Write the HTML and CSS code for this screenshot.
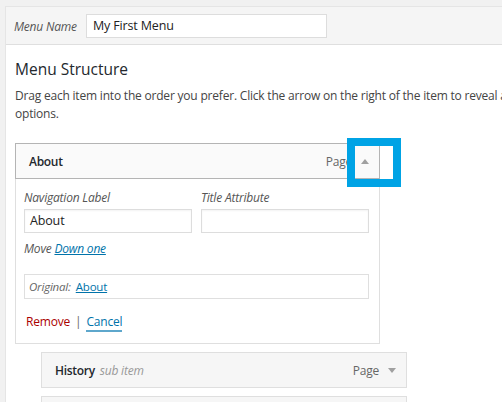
FILE: index.html
```html
<!DOCTYPE html>
<html>
<head>
<meta charset="utf-8">
<link rel="stylesheet" href="styles.css">
</head>
<body>
<div class="page">
  <div class="panel">
    <div class="header">
      <label class="name-label">Menu Name</label>
      <div class="name-input">My First Menu</div>
    </div>
    <div class="body">
      <h3 class="title">Menu Structure</h3>
      <p class="desc">Drag each item into the order you prefer. Click the arrow on the right of the item to reveal additional configuration options.</p>

      <div class="item open">
        <div class="item-bar">
          <span class="item-title">About</span>
          <span class="item-type">Page</span>
          <span class="toggle"><span class="tri up"></span></span>
        </div>
        <div class="settings">
          <div class="fields">
            <div class="field">
              <div class="flabel">Navigation Label</div>
              <div class="finput">About</div>
            </div>
            <div class="field">
              <div class="flabel">Title Attribute</div>
              <div class="finput"></div>
            </div>
          </div>
          <div class="move"><span class="move-label">Move</span> <a class="link">Down one</a></div>
          <div class="original"><span class="orig-label">Original:</span> <a class="link">About</a></div>
          <div class="actions"><a class="remove">Remove</a><span class="sep">|</span><a class="link cancel">Cancel</a></div>
        </div>
        <div class="highlight"></div>
      </div>

      <div class="item sub">
        <div class="item-bar">
          <span class="item-title">History</span><span class="subtag">sub item</span>
          <span class="item-type">Page</span>
          <span class="toggle"><span class="tri down"></span></span>
        </div>
      </div>
      <div class="item sub next">
        <div class="item-bar"></div>
      </div>
    </div>
  </div>
</div>
</body>
</html>
```

FILE: styles.css
```css
html, body {
  margin: 0;
  padding: 0;
}
body {
  background: #f1f1f1;
  font-family: "Open Sans", "Liberation Sans", sans-serif;
  font-size: 12px;
  letter-spacing: -0.2px;
  color: #444;
  width: 502px;
  height: 402px;
  overflow: hidden;
}
.page {
  padding: 6px 0 0 5px;
}
.panel {
  border-left: 1px solid #e5e5e5;
  border-top: 1px solid #e5e5e5;
  background: #fff;
  height: 420px;
}
.header {
  display: flex;
  align-items: center;
  background: #f5f5f5;
  border-bottom: 1px solid #dfdfdf;
  padding: 7px 0 6px 8px;
}
.name-label {
  font-style: italic;
  color: #555;
  width: 72px;
}
.name-input {
  width: 227px;
  height: 22px;
  line-height: 22px;
  padding: 0 6px;
  background: #fff;
  border: 1px solid #ddd;
  font-size: 12.5px;
  letter-spacing: -0.15px;
  color: #222;
}
.body {
  padding: 0 0 0 9px;
}
.title {
  margin: 0;
  padding-top: 14px;
  font-size: 15.5px;
  line-height: 20px;
  font-weight: 500;
  letter-spacing: 0;
  color: #23282d;
}
.desc {
  margin: 8px 0 0 0;
  line-height: 18px;
  width: 650px;
  color: #444;
}
.item {
  position: relative;
  width: 365px;
}
.item.open {
  margin-top: 20px;
}
.item-bar {
  display: flex;
  align-items: center;
  height: 34px;
  background: #fafafa;
  border: 1px solid #b4b4b4;
  padding-left: 13px;
}
.item-title {
  font-weight: 600;
  color: #23282d;
  letter-spacing: -0.3px;
}
.subtag {
  font-style: italic;
  color: #999;
  margin-left: 5px;
}
.item-type {
  margin-left: auto;
  color: #666;
}
.toggle {
  width: 26px;
  display: flex;
  justify-content: center;
  padding-right: 1px;
}
.tri {
  width: 0;
  height: 0;
  border-left: 4px solid transparent;
  border-right: 4px solid transparent;
}
.tri.up {
  border-bottom: 5px solid #a0a0a0;
}
.tri.down {
  border-top: 5px solid #a0a0a0;
}
.settings {
  border: 1px solid #dfdfdf;
  border-top: none;
  padding: 10px 10px 12px 8px;
}
.fields {
  display: flex;
  gap: 9px;
}
.field {
  width: 168px;
}
.flabel {
  font-style: italic;
  color: #555;
  line-height: 18px;
  margin-bottom: 2px;
}
.finput {
  box-sizing: border-box;
  height: 24px;
  line-height: 22px;
  border: 1px solid #ddd;
  padding: 0 5px;
  font-size: 12.5px;
  letter-spacing: -0.15px;
  color: #222;
  box-shadow: inset 0 1px 2px rgba(0,0,0,0.05);
}
.move {
  margin-top: 7px;
  line-height: 18px;
}
.move-label {
  font-style: italic;
  color: #555;
}
.move .link {
  font-style: italic;
}
.link {
  color: #0073aa;
  text-decoration: underline;
}
.original {
  margin-top: 16px;
  box-sizing: border-box;
  height: 25px;
  border: 1px solid #dfdfdf;
  display: flex;
  align-items: center;
  padding-left: 4px;
  width: 345px;
  font-size: 11.5px;
}
.orig-label {
  font-style: italic;
  color: #666;
  margin-right: 5px;
}
.actions {
  margin-top: 14px;
  line-height: 18px;
  padding-left: 2px;
}
.remove {
  color: #a00;
}
.sep {
  color: #666;
  margin: 0 5px;
}
.cancel {
  text-decoration: none;
  border-bottom: 2px solid #5ea7cc;
}
.highlight {
  position: absolute;
  left: 332px;
  top: -5px;
  width: 38px;
  height: 33px;
  border: 8px solid #00a3e5;
}
.item.sub {
  margin-left: 26px;
  width: 366px;
  margin-top: 8px;
}
.item.sub .item-bar {
  background: #f6f6f6;
  border-color: #dfdfdf;
}
.next {
  margin-top: 8px;
}
```
